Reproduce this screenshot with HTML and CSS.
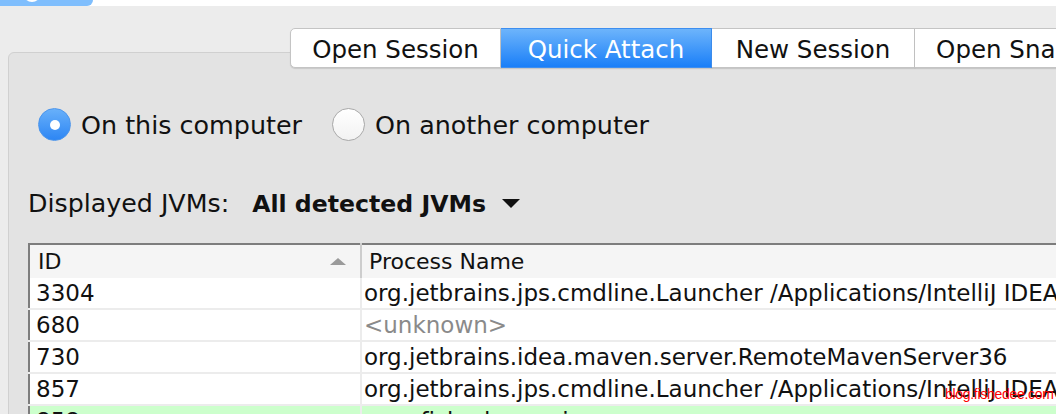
FILE: index.html
```html
<!DOCTYPE html>
<html lang="en">
<head>
  <meta charset="UTF-8" />
  <meta name="viewport" content="width=device-width, initial-scale=1.0" />
  <title>Quick Attach</title>

  <link rel="stylesheet" href="styles.css">

</head>

<body>
    <div class="titlebar">
        <div class="title-blob"><span class="blob-dot"></span></div>
    </div>

    <div class="tabs">
        <div class="tab first">Open Session</div>
        <div class="tab active">Quick Attach</div>
        <div class="tab narrow">New Session</div>
        <div class="tab last">Open Snapshot</div>
    </div>

    <div class="panel">
        <div class="radios">
            <label class="radio-item">
                <span class="radio checked"></span>
                <span>On this computer</span>
            </label>
            <label class="radio-item">
                <span class="radio"></span>
                <span>On another computer</span>
            </label>
        </div>

        <div class="jvm-row">
            <span>Displayed JVMs:</span>
            <span class="jvm-select">All detected JVMs</span>
            <span class="caret"></span>
        </div>

        <table class="jvms">
            <thead>
                <tr>
                    <th class="col-id">ID <span class="sort"></span></th>
                    <th>Process Name</th>
                </tr>
            </thead>
            <tbody>
                <tr><td class="col-id">3304</td><td>org.jetbrains.jps.cmdline.Launcher /Applications/IntelliJ IDEA.app/Contents/lib</td></tr>
                <tr><td class="col-id">680</td><td class="muted">&lt;unknown&gt;</td></tr>
                <tr><td class="col-id">730</td><td>org.jetbrains.idea.maven.server.RemoteMavenServer36</td></tr>
                <tr><td class="col-id">857</td><td>org.jetbrains.jps.cmdline.Launcher /Applications/IntelliJ IDEA.app/Contents/lib</td></tr>
                <tr class="current"><td class="col-id">858</td><td>com.fishedee.main</td></tr>
            </tbody>
        </table>
    </div>

    <div class="watermark">blog.fishedee.com</div>
</body>
</html>
```

FILE: styles.css
```css
body {
  font-family: "DejaVu Sans", Verdana, sans-serif;
  background-color: #ececec;
  color: #111;
  margin: 0;
  height: 414px;
  overflow: hidden;
  position: relative;
}
.titlebar {
  height: 6px;
  background: #fff;
}
.title-blob {
  width: 93px;
  height: 6px;
  background: #7fbefd;
  border-bottom-right-radius: 10px;
  position: relative;
  overflow: hidden;
}
.blob-dot {
  position: absolute;
  left: 24px;
  top: -12px;
  width: 16px;
  height: 14px;
  border-radius: 50%;
  background: #fff;
}
.tabs {
  display: flex;
  margin: 22px 0 0 290px;
  width: 900px;
  position: relative;
  z-index: 1;
}
.tab {
  flex: none;
  width: 210px;
  height: 38px;
  line-height: 41px;
  text-align: center;
  font-size: 24.5px;
  background: #fff;
  border: 1px solid #c4c4c4;
  border-left: none;
  box-shadow: 0 1px 1px rgba(0, 0, 0, 0.12);
  white-space: nowrap;
  box-sizing: content-box;
}
.tab.first {
  border-left: 1px solid #c4c4c4;
  border-radius: 5px 0 0 5px;
  width: 209px;
}
.tab.narrow {
  width: 202px;
}
.tab.last {
  width: 230px;
}
.tab.active {
  background: linear-gradient(#6db4fb, #1a7ff8);
  border-color: #3d8ef0;
  color: #fff;
}
.panel {
  margin: -16px 0 0 8px;
  width: 1100px;
  height: 400px;
  background: #e3e3e3;
  border: 1px solid #d0d0d0;
  border-radius: 6px 0 0 0;
  padding: 55px 0 0 0;
  box-sizing: border-box;
}
.radios {
  display: flex;
  align-items: center;
  gap: 30px;
  padding-left: 29px;
  font-size: 25.4px;
}
.radio-item {
  display: flex;
  align-items: center;
  gap: 10px;
}
.radio {
  width: 33px;
  height: 33px;
  border-radius: 50%;
  box-sizing: border-box;
  background: linear-gradient(#fff, #f2f2f2);
  border: 1px solid #a9a9a9;
  display: flex;
  align-items: center;
  justify-content: center;
}
.radio.checked {
  background: linear-gradient(#68b0fa, #2d86f4);
  border: 1px solid #4b95ec;
}
.radio.checked::after {
  content: "";
  width: 10px;
  height: 10px;
  border-radius: 50%;
  background: #fff;
}
.jvm-row {
  display: flex;
  align-items: center;
  margin-top: 48px;
  padding-left: 19px;
  font-size: 25.3px;
}
.jvm-select {
  font-weight: bold;
  font-size: 23.6px;
  margin-left: 23px;
}
.caret {
  width: 0;
  height: 0;
  border-left: 9px solid transparent;
  border-right: 9px solid transparent;
  border-top: 9px solid #111;
  margin-left: 16px;
}
.jvms {
  margin: 25px 0 0 19px;
  width: 1060px;
  border-collapse: collapse;
  background: #fff;
  border-top: 2px solid #7d7d7d;
  border-left: 2px solid #7d7d7d;
  font-size: 23px;
  table-layout: fixed;
}
.jvms th {
  background: #f5f5f5;
  font-weight: normal;
  text-align: left;
  height: 33px;
  padding: 0 0 0 7px;
  font-size: 22px;
  position: relative;
}
.jvms th.col-id {
  border-right: 2px solid #cdcdcd;
  padding-left: 8px;
}
.jvms td {
  height: 30px;
  padding: 0 0 0 2px;
  border-bottom: 2px solid #ececec;
  white-space: nowrap;
  overflow: hidden;
}
.jvms td.col-id {
  padding-left: 6px;
  border-right: 2px solid #ececec;
}
.col-id {
  width: 322px;
}
.sort {
  position: absolute;
  right: 14px;
  top: 13px;
  width: 0;
  height: 0;
  border-left: 8px solid transparent;
  border-right: 8px solid transparent;
  border-bottom: 7px solid #9a9a9a;
}
.muted {
  color: #8a8a8a;
}
.jvms tr.current td {
  background: #ccffcc;
}
.watermark {
  position: absolute;
  left: 945px;
  top: 386px;
  color: #f00;
  font-family: "Liberation Sans", Arial, sans-serif;
  font-size: 14px;
  letter-spacing: -0.3px;
}
```
